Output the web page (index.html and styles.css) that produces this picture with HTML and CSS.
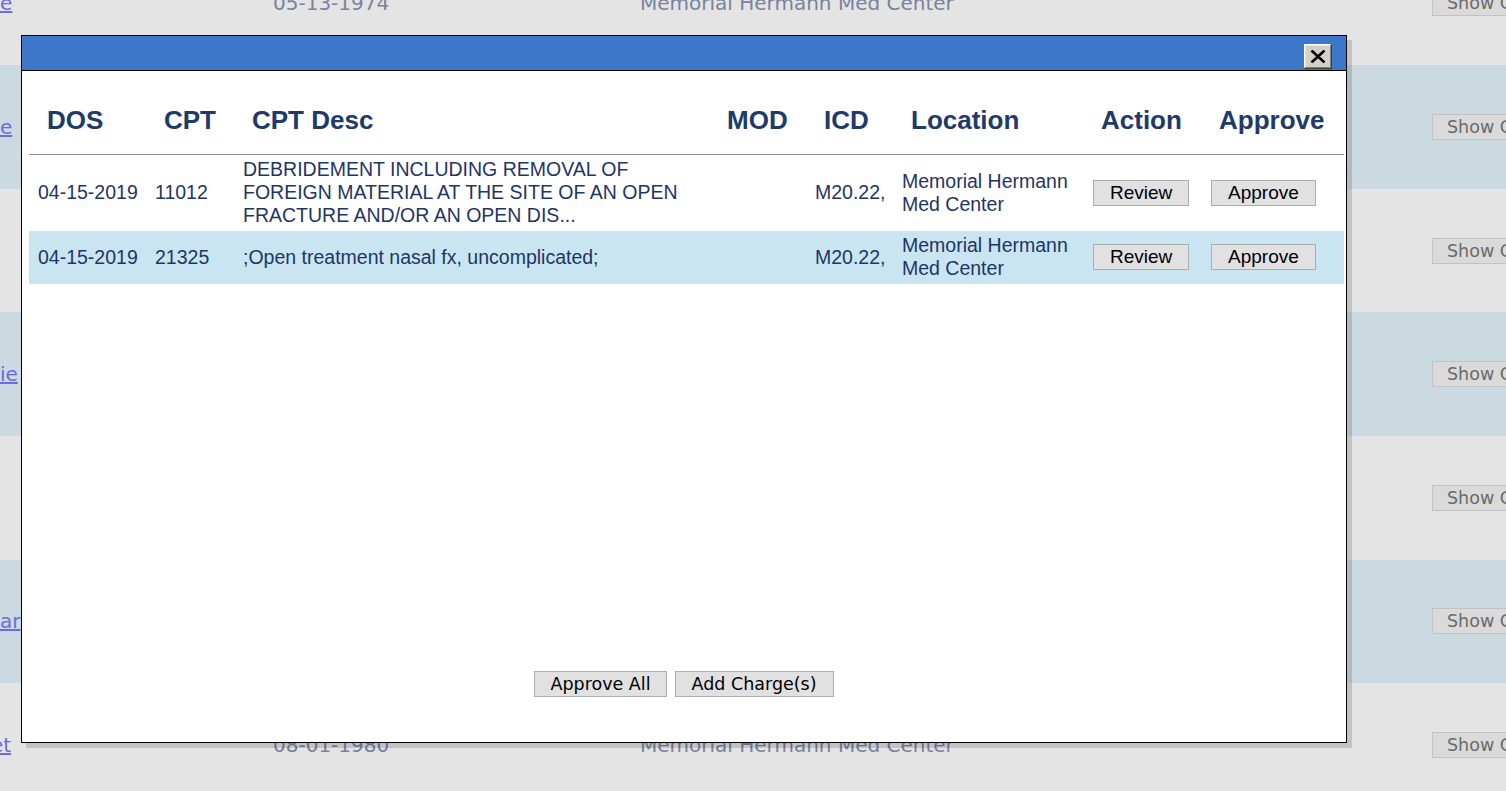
FILE: index.html
```html
<!DOCTYPE html>
<html lang="en">
<head>
    <meta charset="UTF-8">
    <title>Charge Review</title>
    <link rel="stylesheet" href="styles.css">
</head>
<body>
    <!-- patient worklist behind the dialog -->
    <div class="worklist">
        <div class="wl-row">
            <a class="wl-name" href="#">e</a>
            <span class="wl-dob">05-13-1974</span>
            <span class="wl-loc">Memorial Hermann Med Center</span>
            <button class="wl-show">Show Charges</button>
        </div>
        <div class="wl-row alt">
            <a class="wl-name" href="#">e</a>
            <span class="wl-dob">02-21-1962</span>
            <span class="wl-loc">Memorial Hermann Med Center</span>
            <button class="wl-show">Show Charges</button>
        </div>
        <div class="wl-row">
            <a class="wl-name" href="#"></a>
            <span class="wl-dob">11-30-1958</span>
            <span class="wl-loc">Memorial Hermann Med Center</span>
            <button class="wl-show">Show Charges</button>
        </div>
        <div class="wl-row alt">
            <a class="wl-name" href="#">ie</a>
            <span class="wl-dob">07-04-1985</span>
            <span class="wl-loc">Memorial Hermann Med Center</span>
            <button class="wl-show">Show Charges</button>
        </div>
        <div class="wl-row">
            <a class="wl-name" href="#"></a>
            <span class="wl-dob">03-09-1971</span>
            <span class="wl-loc">Memorial Hermann Med Center</span>
            <button class="wl-show">Show Charges</button>
        </div>
        <div class="wl-row alt">
            <a class="wl-name" href="#">ar</a>
            <span class="wl-dob">09-17-1990</span>
            <span class="wl-loc">Memorial Hermann Med Center</span>
            <button class="wl-show">Show Charges</button>
        </div>
        <div class="wl-row">
            <a class="wl-name shifted" href="#">et</a>
            <span class="wl-dob">08-01-1980</span>
            <span class="wl-loc">Memorial Hermann Med Center</span>
            <button class="wl-show">Show Charges</button>
        </div>
    </div>

    <div class="dialog">
        <div class="dialog-title">
            <button class="dialog-close" type="button" aria-label="Close">
                <svg width="16" height="13" viewBox="0 0 16 13">
                    <path d="M1.5 0.5 L14.5 12.5 M14.5 0.5 L1.5 12.5" stroke="#000" stroke-width="2.6" fill="none"/>
                </svg>
            </button>
        </div>
        <div class="dialog-body">
            <table class="charges">
                <colgroup>
                    <col style="width:117px"><col style="width:88px"><col style="width:475px"><col style="width:97px">
                    <col style="width:87px"><col style="width:190px"><col style="width:118px"><col style="width:143px">
                </colgroup>
                <thead>
                    <tr>
                        <th>DOS</th>
                        <th>CPT</th>
                        <th>CPT Desc</th>
                        <th>MOD</th>
                        <th>ICD</th>
                        <th>Location</th>
                        <th>Action</th>
                        <th>Approve</th>
                    </tr>
                </thead>
                <tbody>
                    <tr>
                        <td class="code">04-15-2019</td>
                        <td class="code">11012</td>
                        <td>DEBRIDEMENT INCLUDING REMOVAL OF FOREIGN MATERIAL AT THE SITE OF AN OPEN FRACTURE AND/OR AN OPEN DIS...</td>
                        <td></td>
                        <td class="code">M20.22,</td>
                        <td>Memorial Hermann Med Center</td>
                        <td><button class="row-btn" type="button">Review</button></td>
                        <td><button class="row-btn" type="button">Approve</button></td>
                    </tr>
                    <tr class="alt">
                        <td class="code">04-15-2019</td>
                        <td class="code">21325</td>
                        <td>;Open treatment nasal fx, uncomplicated;</td>
                        <td></td>
                        <td class="code">M20.22,</td>
                        <td>Memorial Hermann Med Center</td>
                        <td><button class="row-btn" type="button">Review</button></td>
                        <td><button class="row-btn" type="button">Approve</button></td>
                    </tr>
                </tbody>
            </table>
        </div>
        <div class="dialog-footer">
            <button class="footer-btn" type="button">Approve All</button>
            <button class="footer-btn" type="button">Add Charge(s)</button>
        </div>
    </div>
</body>
</html>
```

FILE: styles.css
```css
body {
    margin: 0;
    overflow: hidden;
    background-color: #e4e4e4;
    font-family: "DejaVu Sans", Verdana, sans-serif;
}

/* worklist */

.worklist {
    margin-top: -58.4px;
}

.wl-row {
    display: grid;
    grid-template-columns: 273px 367px 792px auto;
    align-items: center;
    height: 123.6px;
    background-color: #e4e4e4;
    font-size: 20px;
    white-space: nowrap;
}

.wl-row.alt {
    background-color: #cbd9e0;
}

.wl-name {
    color: #6b6be4;
}

.wl-name.shifted {
    margin-left: -9px;
}

.wl-dob,
.wl-loc {
    color: #7a82a0;
}

.wl-show {
    justify-self: start;
    height: 26px;
    padding: 0 14px;
    background-color: #dadada;
    border: 1px solid #c2c2c2;
    color: #6a6a6a;
    font-family: "DejaVu Sans", Verdana, sans-serif;
    font-size: 17.5px;
    white-space: nowrap;
}

/* dialog */

.dialog {
    position: absolute;
    left: 21px;
    top: 35px;
    width: 1324px;
    height: 706px;
    display: flex;
    flex-direction: column;
    background-color: white;
    border: 1px solid #000;
    box-shadow: 5px 5px 0 rgba(0, 0, 0, 0.14);
}

.dialog-title {
    display: flex;
    justify-content: flex-end;
    align-items: flex-start;
    height: 35px;
    padding: 8px 14px 0 0;
    box-sizing: border-box;
    background-color: #3c77c9;
    border-bottom: 1px solid #000;
    flex-shrink: 0;
}

.dialog-close {
    width: 28px;
    height: 25px;
    padding: 0;
    display: flex;
    align-items: center;
    justify-content: center;
    background-color: #d4d0c8;
    border: none;
    box-shadow: inset -1px -1px #404040, inset 1px 1px #ffffff, inset -2px -2px #808080, inset 2px 2px #e8e6e2;
}

.dialog-body {
    flex: 1;
    padding: 16px 0 0 7px;
}

.charges {
    width: 1315px;
    table-layout: fixed;
    border-collapse: collapse;
    font-family: "Liberation Sans", Arial, sans-serif;
    color: #1f3566;
}

.charges th {
    padding: 18px 9px 19px 18px;
    font-size: 26px;
    line-height: 30px;
    font-weight: bold;
    text-align: left;
    color: #203a6a;
    border-bottom: 1px solid #8c8c8c;
}

.charges td {
    padding: 3px 9px 4px 9px;
    font-size: 19.5px;
    line-height: 23px;
    vertical-align: middle;
}

.charges td.code {
    white-space: nowrap;
}

.charges tr.alt td {
    background-color: #c8e5f1;
}

.row-btn {
    height: 26px;
    margin-left: 1px;
    padding: 0 16px;
    background-color: #e1e1e1;
    border: 1px solid #adadad;
    color: #000;
    font-family: "Liberation Sans", Arial, sans-serif;
    font-size: 19px;
    vertical-align: middle;
}

.dialog-footer {
    display: flex;
    justify-content: center;
    gap: 8px;
    padding-bottom: 45px;
}

.footer-btn {
    height: 26px;
    padding: 0 15px;
    background-color: #e1e1e1;
    border: 1px solid #adadad;
    color: #000;
    font-family: "DejaVu Sans", Verdana, sans-serif;
    font-size: 17.5px;
}

.footer-btn + .footer-btn {
    padding: 0 16px;
}
```
